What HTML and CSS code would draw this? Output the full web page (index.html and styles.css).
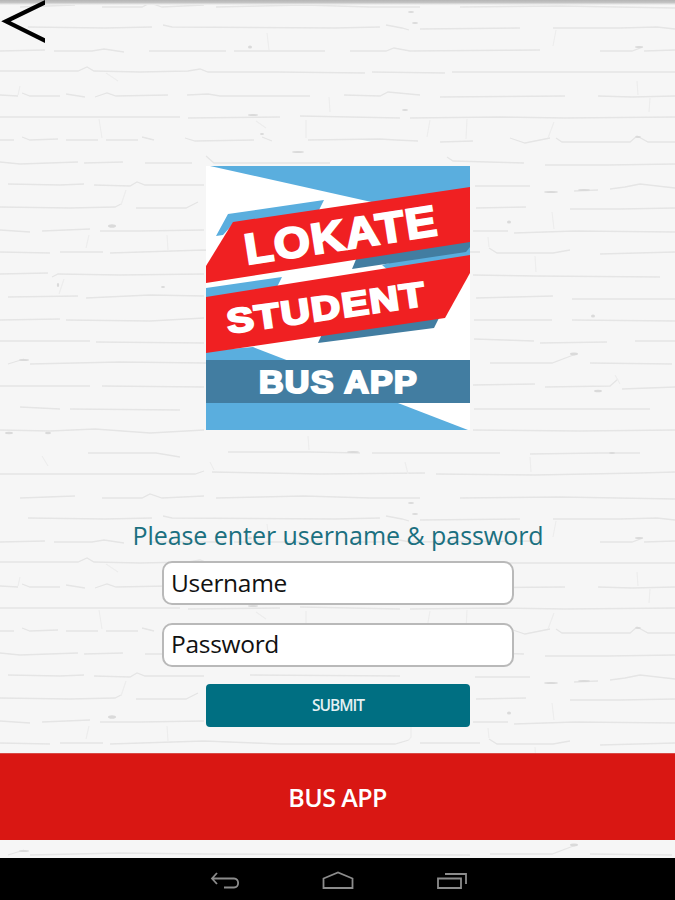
FILE: index.html
```
<!DOCTYPE html>
<html lang="en">

<head>
    <meta charset="UTF-8">
    <meta name="viewport" content="width=device-width, initial-scale=1.0">
    <title>Lokate Student Bus App</title>
    <link rel="stylesheet" href="styles.css">
</head>

<body>
    <!-- brick wall -->
    <svg class="wall" width="675" height="900">
        <defs>
            <pattern id="bricks" width="675" height="491" patternUnits="userSpaceOnUse">
                <!-- mortar lines -->
                <g class="mortar">
                    <path d="M28 27 L105 28 L152 27 M163 25 L172 27 L335 28 L380 27 M386 25 L402 28 L409 30 M420 29 L520 28 M553 28 L620 28 L657 27 L675 29" />
                    <path d="M0 51 L45 50 M54 51 L92 51 L104 49 L124 52 M149 51 L226 51 M234 51 L325 51 M350 51 L386 51 L394 48 L410 51 L540 50 M600 51 L632 51 L643 47 M644 51 L675 50" />
                    <path d="M0 71 L48 71 L78 71 L87 67 L94 71 L140 72 L188 71 L200 69 L208 72 L278 72 L365 73 M372 72 L445 73 M452 72 L605 72 L675 72" />
                    <path d="M0 95 L18 96 M22 93 L30 96 L60 96 M66 94 L85 97 M95 97 L107 93 L116 96 L168 95 M187 95 L208 94 L220 96 L310 96 M344 95 L380 96 L388 92 L420 95 M440 97 L565 96 M598 96 L632 97 L675 96" />
                    <path d="M0 117 L90 117 L180 117 M188 118 L280 117 M300 116 L400 118 M410 118 L500 117 L565 118 L675 117" />
                    <path d="M0 140 L14 140 M22 137 L30 140 L58 139 M66 140 L98 140 M106 140 L138 140 M142 137 L154 140 M185 138 L195 141 L254 140 M262 137 L272 141 M308 140 L380 139 L396 140 L418 141 M440 142 L473 141 M510 138 L525 143 L550 138 M556 138 L562 142 L630 142 L637 136 L648 142 L675 142" />
                    <path d="M0 162 L20 164 L78 162 M84 163 L123 162 M145 163 L192 163 M206 156 L214 163 L330 163 M447 157 L453 161 L524 163 M545 165 L608 165 L675 164" />
                    <path d="M8 184 L60 185 L84 184 M94 185 L130 186 L137 182 L145 185 L204 185 M250 184 L400 185 M475 186 L530 186 M574 191 L598 190 M610 189 L625 187 L640 184 L675 188" />
                    <path d="M0 207 L70 208 L115 207 L121 204 M136 208 L186 208 L198 202 M476 208 L526 207 M570 209 L620 209 L675 208" />
                    <path d="M0 230 L30 232 M42 231 L90 229 M100 231 L140 231 L204 230 M473 231 L508 231 M514 233 L575 231 L675 232" />
                    <path d="M0 252 L50 253 M60 252 L103 252 M110 253 L204 250 L280 253 L395 253 L409 249 M420 252 L480 252 M489 248 L497 253 L553 253 L570 250 M600 254 L675 252" />
                    <path d="M0 274 L48 273 M52 277 L58 274 L120 275 L204 274 M473 275 L535 276 L660 277" />
                    <path d="M8 297 L78 296 M86 298 L150 295 L204 296 M476 298 L553 296 M572 299 L675 299" />
                    <path d="M0 320 L60 319 M66 320 L150 321 L204 318 M474 320 L552 320 M572 320 L675 321" />
                    <path d="M0 341 L90 341 M96 342 L204 343 M474 339 L534 341 M540 343 L607 342 M635 341 L675 341" />
                    <path d="M8 364 L24 359 M30 364 L120 362 L204 363 L470 364 M490 363 L552 363 L576 354 M590 363 L672 364" />
                    <path d="M0 386 L90 386 M102 386 L204 387 M473 385 L535 384 M545 387 L610 386 L618 379 M622 389 L675 387" />
                    <path d="M20 407 L60 409 M70 409 L180 410 M474 409 L560 409 L650 409" />
                    <path d="M0 430 L50 431 L95 429 L150 433 L204 430 M473 430 L580 431 L675 430" />
                    <path d="M88 453 L156 453 L180 457 M228 452 L310 452 L360 453 M372 453 L500 453 M530 454 L600 453 L640 453" />
                    <path d="M0 474 L60 474 L195 474 L204 471 M212 472 L320 474 L425 473 M436 474 L535 475 L640 473 L675 472" />
                    <path d="M20 7 L75 5 M102 7 L142 7 L150 3 L162 7 L204 5 M216 7 L304 5 L370 7 L420 7 M460 7 L560 6 L675 8" />
                </g>
                <!-- joints between the bricks -->
                <g class="joint">
                    <path d="M267 33 L269 50 M556 30 L553 46 M20 86 L18 95 M329 97 L330 112 M637 81 L638 95 M99 119 L102 138 M306 120 L306 138 M430 120 L427 137 M467 119 L466 139 M554 122 L548 138 M126 190 L121 205 M89 235 L86 248 M167 235 L168 250 M552 212 L554 229 M488 237 L489 247 M411 236 L411 246 L408 250 M64 279 L59 294 M535 256 L536 272 M615 375 L620 384 M308 436 L309 450 M530 457 L531 472 M405 462 L408 474" />
                    <path d="M106 73 L118 81 M650 98 L649 112 M256 121 L266 128 M42 456 L48 466 M210 462 L214 470" />
                </g>
                <!-- dents -->
                <g class="dents">
                    <ellipse cx="250" cy="47" rx="2" ry="1.5" />
                    <ellipse cx="411" cy="12" rx="3" ry="1" />
                    <ellipse cx="415" cy="23" rx="3" ry="1" />
                    <ellipse cx="639" cy="47" rx="4" ry="1" />
                    <ellipse cx="253" cy="115" rx="5" ry="1" />
                    <ellipse cx="405" cy="110" rx="3" ry="1" />
                    <ellipse cx="262" cy="134" rx="2" ry="1" />
                    <ellipse cx="298" cy="152" rx="6" ry="1" />
                    <ellipse cx="638" cy="137" rx="3" ry="1" />
                    <ellipse cx="551" cy="192" rx="7" ry="1" />
                    <ellipse cx="584" cy="190" rx="6" ry="1" />
                    <ellipse cx="112" cy="226" rx="4" ry="1.8" />
                    <ellipse cx="509" cy="222" rx="2" ry="1.5" />
                    <ellipse cx="58" cy="285" rx="1.2" ry="2" />
                    <ellipse cx="163" cy="287" rx="2" ry="1" />
                    <ellipse cx="593" cy="316" rx="2" ry="1.5" />
                    <ellipse cx="574" cy="354" rx="4" ry="1.4" />
                    <ellipse cx="24" cy="360" rx="5" ry="1" />
                    <ellipse cx="598" cy="391" rx="4" ry="1.3" />
                    <ellipse cx="9" cy="433" rx="4" ry="1.2" />
                    <ellipse cx="48" cy="433" rx="3" ry="1.2" />
                    <ellipse cx="353" cy="452" rx="6" ry="1" />
                    <ellipse cx="612" cy="453" rx="3" ry="1" />
                </g>
            </pattern>
            <linearGradient id="shade" x1="0" y1="0" x2="0" y2="1">
                <stop offset="0" stop-color="#b4b4b4" />
                <stop offset="0.5" stop-color="#c4c4c4" />
                <stop offset="1" stop-color="#f5f5f5" />
            </linearGradient>
        </defs>
        <rect width="675" height="900" fill="#f6f6f6" />
        <rect width="675" height="900" fill="url(#bricks)" />
        <rect width="675" height="5" fill="url(#shade)" />
    </svg>

    <div class="app">
        <header class="top">
            <svg class="back" width="45" height="45" viewBox="0 0 45 45">
                <path d="M47 1.4 L6 21.3 L47 41.6" />
            </svg>
        </header>

        <main class="content">
            <svg class="logo" width="264" height="264" viewBox="0 0 264 264">
                <rect width="264" height="264" fill="#fff" />
                <g fill="#5aaede">
                    <polygon points="4,0 264,0 264,30 170,37 161,35" />
                    <polygon points="22,48 118,34 112,46 27,58 17,69 10,70" />
                    <polygon points="176,99 264,76 264,92 182,104" />
                    <polygon points="0,122 76,111 71,121 0,133" />
                    <polygon points="0,185 47,181 262,264 0,264" />
                </g>
                <g fill="#427da1">
                    <polygon points="151,91 264,74 264,81 260,86 146,103" />
                    <polygon points="116,168 233,152 228,162 112,177" />
                    <rect y="194" width="264" height="43" />
                </g>
                <g fill="#f02022">
                    <polygon points="27,56 264,21 264,76 0,117 0,100" />
                    <polygon points="0,131 264,89 264,107 239,152 0,187" />
                </g>
                <g class="logo-text">
                    <text transform="translate(41 98.5) rotate(-8.8)" font-size="43" textLength="195" lengthAdjust="spacingAndGlyphs">LOKATE</text>
                    <text transform="translate(22.5 167.5) rotate(-8.1)" font-size="34" textLength="201" lengthAdjust="spacingAndGlyphs">STUDENT</text>
                    <text x="53" y="226.5" font-size="31.5" textLength="159" lengthAdjust="spacingAndGlyphs">BUS APP</text>
                </g>
            </svg>

            <form class="login">
                <p class="hint">Please enter username &amp; password</p>
                <input class="field user" type="text" placeholder="Username">
                <input class="field pass" type="text" placeholder="Password">
                <button class="submit" type="button">SUBMIT</button>
            </form>
        </main>

        <div class="banner"><span>BUS APP</span></div>

        <nav class="navbar">
            <svg width="30" height="20" viewBox="0 0 30 20">
                <path d="M7 2 L2 7.5 L7 13 M2 7.5 H24 C29.5 7.5 29.5 16.5 24 16.5 H14" />
            </svg>
            <svg width="32" height="20" viewBox="0 0 32 20">
                <path d="M1.5 17 V7.5 L16 1.5 L30.5 7.5 V17 Z" />
            </svg>
            <svg width="32" height="20" viewBox="0 0 32 20">
                <path d="M2 7.5 H25 V17 H2 Z M9 3 H30 V13" />
            </svg>
        </nav>
    </div>
</body>

</html>
```
FILE: styles.css
```
body {
    margin: 0;
    padding: 0;
    font-family: "Open Sans", "Noto Sans", sans-serif;
    overflow: hidden;
}

/* wall lies under the whole page */
.wall {
    position: absolute;
    top: 0;
    left: 0;
    z-index: -1;
}

.mortar {
    fill: none;
    stroke: #e5e5e5;
    stroke-width: 1.3;
}

.joint {
    fill: none;
    stroke: #ededed;
    stroke-width: 1.2;
}

.dents {
    fill: #dadada;
}

.app {
    display: flex;
    flex-direction: column;
    width: 675px;
    height: 900px;
}

.top {
    height: 45px;
}

.back {
    display: block;
    fill: none;
    stroke: #000;
    stroke-width: 4.2;
}

.content {
    display: flex;
    flex-direction: column;
    align-items: center;
    height: 587px;
    padding-top: 121px;
    padding-left: 1px;
}

.logo {
    display: block;
}

.logo-text {
    font-family: "Liberation Sans", Arial, sans-serif;
    font-weight: bold;
    letter-spacing: 1.2px;
    fill: #fff;
    stroke: #fff;
    stroke-width: 2.2;
}

.login {
    display: flex;
    flex-direction: column;
    align-items: center;
    margin-top: 88px;
}

.hint {
    margin: 0 0 9px;
    height: 34px;
    line-height: 34px;
    font-size: 25px;
    letter-spacing: -0.05px;
    color: #1b7080;
    white-space: nowrap;
}

.field {
    width: 352px;
    height: 44px;
    margin-bottom: 17.5px;
    padding: 0 7px 2px;
    border: 2px solid #b9b9b9;
    border-radius: 10px;
    background: #fff;
    box-sizing: border-box;
    font-family: inherit;
    font-size: 24.5px;
    letter-spacing: -0.3px;
    color: #111;
}

.field::placeholder {
    color: #111;
    opacity: 1;
}

.submit {
    width: 264px;
    height: 43px;
    padding: 0 0 2px;
    border: none;
    border-radius: 4px;
    background: #006f82;
    font-family: inherit;
    font-size: 15.5px;
    font-weight: 600;
    letter-spacing: -1px;
    color: #e4f1f3;
}

.banner {
    display: flex;
    justify-content: center;
    align-items: center;
    height: 87px;
    margin-bottom: 18px;
    padding-bottom: 1px;
    background: #d91713;
    border-top: 1px solid #d84a46;
    box-sizing: border-box;
    font-size: 25px;
    font-weight: 600;
    letter-spacing: -0.6px;
    color: #fff;
}

.navbar {
    display: flex;
    justify-content: center;
    align-items: center;
    gap: 82px;
    height: 42px;
    padding: 3px 0 0 2px;
    background: #000;
    box-sizing: border-box;
}

.navbar svg {
    fill: none;
    stroke: #8c8c8c;
    stroke-width: 1.8;
}
```
